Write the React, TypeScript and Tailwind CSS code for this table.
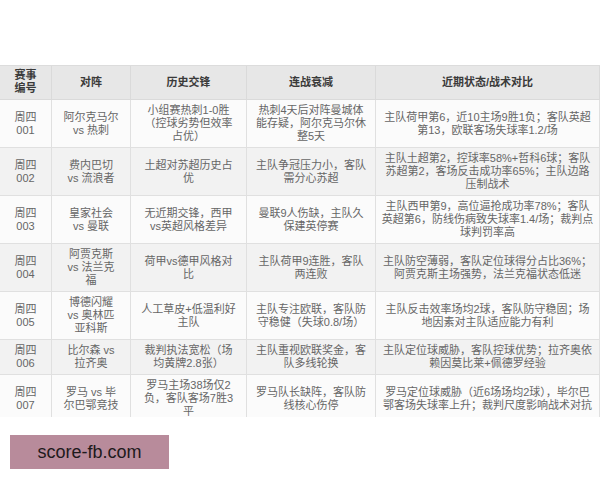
import React from "react";

const header = ["赛事\n编号", "对阵", "历史交锋", "连战衰减", "近期状态/战术对比"];

const rows: string[][] = [
  ["周四\n001", "阿尔克马尔\nvs 热刺", "小组赛热刺1-0胜\n（控球劣势但效率\n占优）", "热刺4天后对阵曼城体\n能存疑，阿尔克马尔休\n整5天", "主队荷甲第6，近10主场9胜1负；客队英超\n第13，欧联客场失球率1.2/场"],
  ["周四\n002", "费内巴切\nvs 流浪者", "土超对苏超历史占\n优", "主队争冠压力小，客队\n需分心苏超", "主队土超第2，控球率58%+哲科6球；客队\n苏超第2，客场反击成功率65%；主队边路\n压制战术"],
  ["周四\n003", "皇家社会\nvs 曼联", "无近期交锋，西甲\nvs英超风格差异", "曼联9人伤缺，主队久\n保建英停赛", "主队西甲第9，高位逼抢成功率78%；客队\n英超第6，防线伤病致失球率1.4/场；裁判点\n球判罚率高"],
  ["周四\n004", "阿贾克斯\nvs 法兰克\n福", "荷甲vs德甲风格对\n比", "主队荷甲9连胜，客队\n两连败", "主队防空薄弱，客队定位球得分占比36%；\n阿贾克斯主场强势，法兰克福状态低迷"],
  ["周四\n005", "博德闪耀\nvs 奥林匹\n亚科斯", "人工草皮+低温利好\n主队", "主队专注欧联，客队防\n守稳健（失球0.8/场）", "主队反击效率场均2球，客队防守稳固；场\n地因素对主队适应能力有利"],
  ["周四\n006", "比尔森 vs\n拉齐奥", "裁判执法宽松（场\n均黄牌2.8张）", "主队重视欧联奖金，客\n队多线轮换", "主队定位球威胁，客队控球优势；拉齐奥依\n赖因莫比莱+佩德罗经验"],
  ["周四\n007", "罗马 vs 毕\n尔巴鄂竞技", "罗马主场38场仅2\n负，客队客场7胜3\n平", "罗马队长缺阵，客队防\n线核心伤停", "罗马定位球威胁（近6场场均2球），毕尔巴\n鄂客场失球率上升；裁判尺度影响战术对抗"],
];

function Lines({ text }: { text: string }) {
  const parts = text.split("\n");
  return (
    <>
      {parts.map((p, i) => (
        <span key={i} className="block whitespace-nowrap">
          {p}
        </span>
      ))}
    </>
  );
}

export default function App() {
  return (
    <div
      className="w-[600px] h-[480px] bg-white overflow-hidden"
      style={{ fontFamily: '"Liberation Sans", "Noto Sans CJK SC", sans-serif' }}
    >
      <div className="mt-[65px] h-[352px] overflow-hidden">
        <div className="grid grid-cols-[52px_79px_116px_129px_224px] border-t border-[#dcdcdc] text-[11px] leading-[13px]">
          {header.map((h, i) => (
            <div
              key={"h" + i}
              className="bg-[#e7e7e7] border-b border-r border-[#dadada] pt-[3px] pb-[4px] flex flex-col items-center justify-center text-center font-bold text-[#3a3a3a]"
            >
              <Lines text={h} />
            </div>
          ))}
          {rows.map((r, ri) =>
            r.map((c, ci) => (
              <div
                key={ri + "-" + ci}
                className={
                  "border-b border-r border-[#e0e0e0] py-[4px] flex flex-col items-center justify-center text-center text-[#666666] " +
                  (ri % 2 === 0 ? "bg-[#fbfbfb]" : "bg-[#f2f2f2]")
                }
              >
                <Lines text={c} />
              </div>
            ))
          )}
        </div>
      </div>
      <div className="mt-[18px] ml-[10px] w-[159px] h-[34px] bg-[#b88b9b] flex items-center justify-center text-[18px] text-[#1e1a1c]">
        score-fb.com
      </div>
    </div>
  );
}
